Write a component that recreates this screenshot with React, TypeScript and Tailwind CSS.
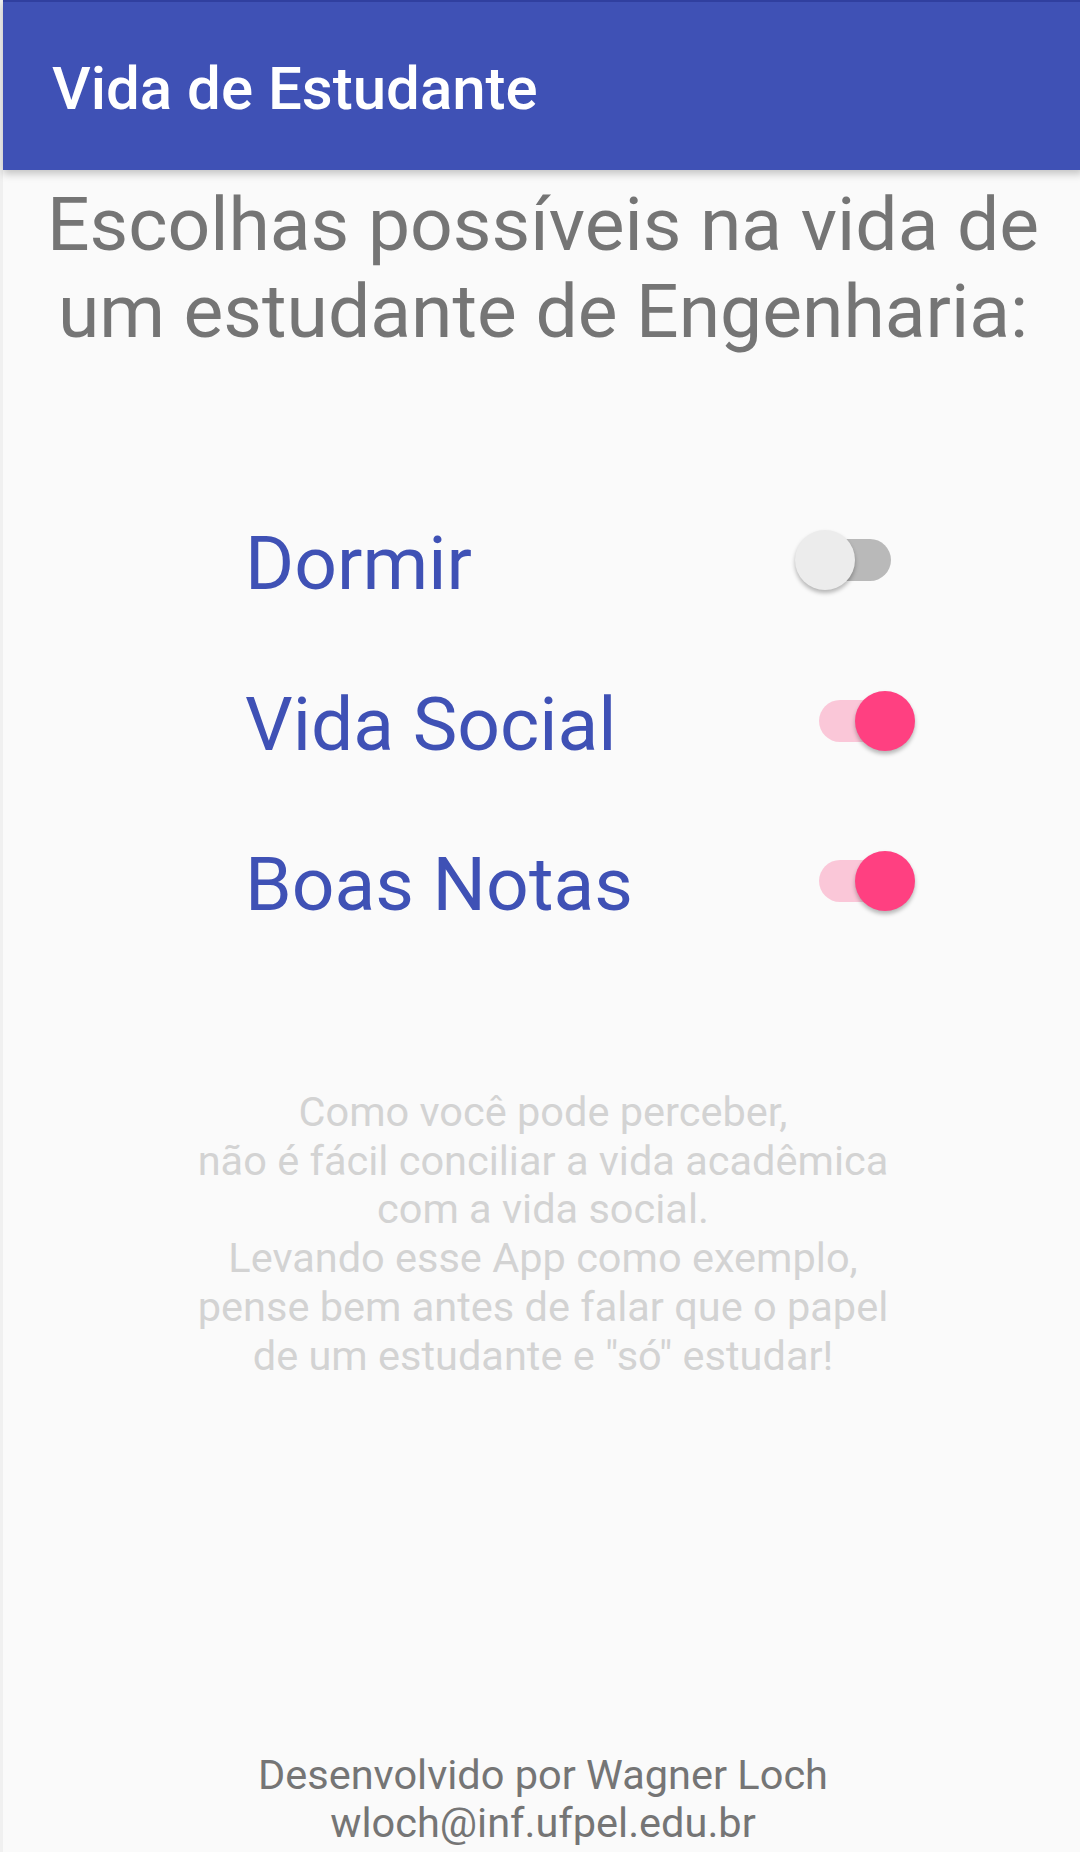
import { useState } from "react";

// Android-style switch: 72px track, 60px thumb overhanging both ends
function Toggle({ on, onChange }: { on: boolean; onChange: () => void }) {
  return (
    <button
      onClick={onChange}
      className="relative w-[120px] h-[60px] shrink-0 cursor-pointer"
      aria-pressed={on}
    >
      <span
        className={
          "absolute left-[24px] top-[9px] w-[72px] h-[42px] rounded-full " +
          (on ? "bg-[#fac7d8]" : "bg-[#b9b9b9]")
        }
      />
      <span
        className={
          "absolute top-0 w-[60px] h-[60px] rounded-full shadow-[0_3px_4px_rgba(0,0,0,0.28)] " +
          (on ? "left-[60px] bg-[#ff4081]" : "left-0 bg-[#ececec]")
        }
      />
    </button>
  );
}

export default function App() {
  const [dormir, setDormir] = useState(false);
  const [social, setSocial] = useState(true);
  const [notas, setNotas] = useState(true);

  const rows = [
    { label: "Dormir", on: dormir, toggle: () => setDormir(!dormir) },
    { label: "Vida Social", on: social, toggle: () => setSocial(!social) },
    { label: "Boas Notas", on: notas, toggle: () => setNotas(!notas) },
  ];

  return (
    <div
      className="flex w-[1080px] h-[1852px] overflow-hidden bg-[#fafafa]"
      style={{ fontFamily: "Roboto, 'Noto Sans', sans-serif" }}
    >
      {/* faixa lateral do print */}
      <div className="w-[3px] shrink-0 bg-[#f0f0f0]" />

      <div className="w-[1080px] shrink-0 flex flex-col h-full">
        {/* barra superior */}
        <header className="relative h-[170px] shrink-0 bg-[#3f51b5] border-t-2 border-[#303f9f] shadow-[0_4px_8px_rgba(0,0,0,0.22)] z-10">
          <h1 className="pl-[49px] pt-[52px] text-[60px] leading-[70px] font-medium text-white">
            Vida de Estudante
          </h1>
        </header>

        <main className="flex-1 flex flex-col">
          <p className="mt-[11px] text-center text-[75px] leading-[87px] text-[#757575]">
            Escolhas possíveis na vida de
            <br />
            um estudante de Engenharia:
          </p>

          <div className="mt-[165px] flex flex-col gap-[73.5px] pl-[242px] pr-[168px]">
            {rows.map((r) => (
              <div key={r.label} className="flex items-start justify-between h-[87px]">
                <span className="text-[75px] leading-[87px] text-[#3f51b5]">{r.label}</span>
                <div className="mt-[10px]">
                  <Toggle on={r.on} onChange={r.toggle} />
                </div>
              </div>
            ))}
          </div>

          <p className="mt-[160px] text-center text-[41.5px] leading-[48.7px] text-[#d3d3d3]">
            Como você pode perceber,
            <br />
            não é fácil conciliar a vida acadêmica
            <br />
            com a vida social.
            <br />
            Levando esse App como exemplo,
            <br />
            pense bem antes de falar que o papel
            <br />
            de um estudante e "só" estudar!
          </p>

          <footer className="mt-auto mb-[5px] text-center text-[41.5px] leading-[48px] text-[#757575]">
            Desenvolvido por Wagner Loch
            <br />
            wloch@inf.ufpel.edu.br
          </footer>
        </main>
      </div>
    </div>
  );
}
